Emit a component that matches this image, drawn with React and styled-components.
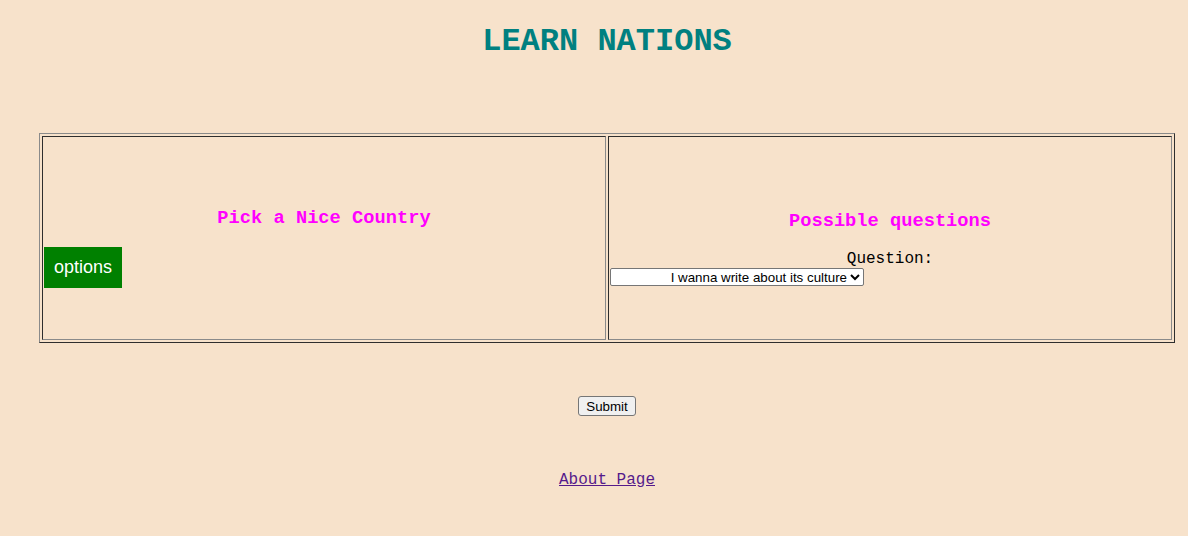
import React from 'react'
import styled, { createGlobalStyle } from 'styled-components'

const GlobalStyle = createGlobalStyle`
  body {
    margin: 0;
    background: #f7e2cb;
    font-family: "Liberation Mono", "Courier New", monospace;
  }
`

const Page = styled.div`
  padding: 0 13px 0 39px;
  text-align: center;
`

const Title = styled.h1`
  margin: 24px 0 73px;
  font-size: 32px;
  line-height: 36px;
  font-weight: bold;
  color: #008080;
`

const Grid = styled.table`
  width: 100%;
  height: 210px;
  table-layout: fixed;
  border-collapse: separate;
  border-spacing: 2px;
  border: 1px solid;
  border-color: #8a8a8a #2e2e2e #2e2e2e #8a8a8a;
`

const Cell = styled.td`
  padding: 1px;
  border: 1px solid;
  border-color: #2e2e2e #8a8a8a #8a8a8a #2e2e2e;
  text-align: center;
  vertical-align: middle;
`

const Heading = styled.h3`
  margin: ${(p) => (p.$tight ? '19px 0 0' : '18.72px 0')};
  font-size: 18.72px;
  line-height: 22px;
  font-weight: bold;
  color: #ff00ff;
`

const OptionsButton = styled.div`
  width: fit-content;
  padding: 9px 10px 10px;
  background: #008000;
  color: #fff;
  font-family: "Liberation Sans", Arial, sans-serif;
  font-size: 18px;
  line-height: 22px;
`

const Label = styled.div`
  margin-top: 18px;
  font-size: 16px;
  line-height: 18px;
  color: #000;
`

const Select = styled.select`
  display: block;
  width: 254px;
  height: 18px;
  font-family: "Liberation Sans", Arial, sans-serif;
  font-size: 13.33px;
  text-align: right;
  text-align-last: right;
  background: #fff;
  border: 1px solid #767676;
  border-radius: 2px;
`

const SubmitButton = styled.button`
  margin-top: 53px;
  height: 20px;
  padding: 0 7px;
  font-family: "Liberation Sans", Arial, sans-serif;
  font-size: 13.33px;
  background: #f0f0f0;
  border: 1px solid #767676;
  border-radius: 3px;
  color: #000;
`

const AboutLink = styled.a`
  display: inline-block;
  margin-top: 55px;
  font-size: 16px;
  line-height: 18px;
  color: #551a8b;
  text-decoration: underline;
`

const App = () => (
  <Page>
    <GlobalStyle />
    <Title>LEARN NATIONS</Title>
    <Grid>
      <tbody>
        <tr>
          <Cell>
            <Heading>Pick a Nice Country</Heading>
            <OptionsButton>options</OptionsButton>
          </Cell>
          <Cell>
            <Heading $tight>Possible questions</Heading>
            <Label>Question:</Label>
            <Select defaultValue="culture">
              <option value="culture">I wanna write about its culture</option>
              <option value="history">I wanna write about its history</option>
            </Select>
          </Cell>
        </tr>
      </tbody>
    </Grid>
    <div>
      <SubmitButton>Submit</SubmitButton>
    </div>
    <div>
      <AboutLink href="#about">About Page</AboutLink>
    </div>
  </Page>
)

export default App
